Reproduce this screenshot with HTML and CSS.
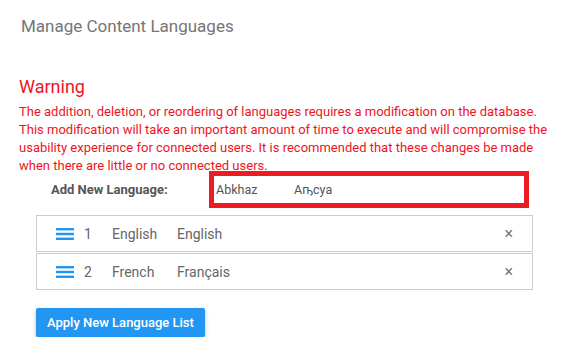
FILE: index.html
```html
<!DOCTYPE html>
<html lang="en">
<head>
  <meta charset="UTF-8">
  <title>Manage Content Languages</title>
  <link rel="stylesheet" href="styles.css">
</head>
<body>
  <div class="page">
    <h2 class="title">Manage Content Languages</h2>
    <h3 class="warning-title">Warning</h3>
    <p class="warning-text">The addition, deletion, or reordering of languages requires a modification on the database. This modification will take an important amount of time to execute and will compromise the usability experience for connected users. It is recommended that these changes be made when there are little or no connected users.</p>

    <div class="add-row">
      <label class="add-label">Add New Language:</label>
      <div class="picker">
        <span class="lang-name">Abkhaz</span>
        <span class="lang-native">Аҧсуа</span>
      </div>
    </div>

    <ul class="lang-list">
      <li class="lang-item">
        <svg class="handle" width="18" height="12" viewBox="0 0 18 12"><rect y="0" width="18" height="2.4" fill="#2196f3"/><rect y="4.8" width="18" height="2.4" fill="#2196f3"/><rect y="9.6" width="18" height="2.4" fill="#2196f3"/></svg>
        <span class="num">1</span>
        <span class="name">English</span>
        <span class="native">English</span>
        <span class="remove">&times;</span>
      </li>
      <li class="lang-item">
        <svg class="handle" width="18" height="12" viewBox="0 0 18 12"><rect y="0" width="18" height="2.4" fill="#2196f3"/><rect y="4.8" width="18" height="2.4" fill="#2196f3"/><rect y="9.6" width="18" height="2.4" fill="#2196f3"/></svg>
        <span class="num">2</span>
        <span class="name">French</span>
        <span class="native">Français</span>
        <span class="remove">&times;</span>
      </li>
    </ul>

    <button class="apply">Apply New Language List</button>
  </div>
</body>
</html>
```

FILE: styles.css
```css
body {
  margin: 0;
  font-family: Roboto, "Noto Sans", sans-serif;
  background: white;
}
.page {
  padding: 15px 18px 0 19px;
}
.title {
  margin: 0 0 0 2px;
  font-size: 17px;
  font-weight: 400;
  line-height: 22px;
  color: #757575;
}
.warning-title {
  margin: 39px 0 0;
  font-size: 18px;
  font-weight: 400;
  line-height: 22px;
  color: #f0141e;
}
.warning-text {
  margin: 5px 0 0;
  font-size: 13px;
  line-height: 18px;
  color: #f0141e;
}
.add-row {
  display: flex;
  align-items: center;
  margin-top: -4px;
}
.add-label {
  flex-shrink: 0;
  width: 158px;
  padding-left: 32px;
  font-size: 13px;
  font-weight: bold;
  color: #555;
}
.picker {
  display: flex;
  align-items: center;
  width: 310px;
  height: 27px;
  border: 5px solid #ed1c24;
  font-size: 12.5px;
  color: #555;
}
.lang-name {
  flex-shrink: 0;
  width: 78px;
  padding-left: 2px;
}
.lang-list {
  list-style: none;
  margin: 7px 0 0 17px;
  padding: 0;
  width: 497px;
}
.lang-item {
  display: flex;
  align-items: center;
  height: 35px;
  border: 1px solid #ccc;
  font-size: 14px;
  color: #666;
}
.lang-item + .lang-item {
  margin-top: 1px;
}
.handle {
  margin-left: 19px;
}
.num {
  margin-left: 10px;
  width: 28px;
}
.name {
  width: 65px;
}
.native {
  flex: 1;
}
.remove {
  margin-right: 19px;
  font-size: 16px;
  color: #777;
}
.apply {
  margin: 18px 0 0 17px;
  padding: 0 11px;
  height: 29px;
  white-space: nowrap;
  font-family: Roboto, sans-serif;
  font-size: 13px;
  font-weight: 500;
  color: white;
  background: #2196f3;
  border: none;
  border-radius: 2px;
  box-shadow: 0 2px 4px rgba(0, 0, 0, 0.25);
}
```
